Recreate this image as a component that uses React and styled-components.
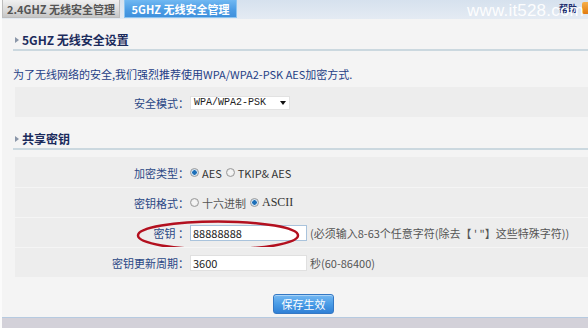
import styled, { createGlobalStyle } from 'styled-components'

const GlobalStyle = createGlobalStyle`
  html, body {
    margin: 0;
    padding: 0;
    background: #f4f4f4;
  }
  body {
    font-family: "Noto Sans CJK SC", "Liberation Sans", sans-serif;
    font-size: 11px;
  }
`

const Page = styled.div`
  width: 588px;
  height: 328px;
  display: flex;
  flex-direction: column;
  background: #f4f4f4;
  border-left: 2px solid #fbfbfb;
  box-sizing: border-box;
  overflow: hidden;
  position: relative;
`

const TabBar = styled.div`
  height: 19px;
  flex: none;
  display: flex;
  align-items: stretch;
  gap: 4px;
  background: linear-gradient(#d6e1ee, #e4ebf3);
  position: relative;
`

const Tab = styled.div`
  width: ${p => p.w}px;
  height: 18px;
  box-sizing: border-box;
  display: flex;
  align-items: center;
  justify-content: center;
  font-weight: bold;
  font-size: 11px;
  color: ${p => (p.active ? '#ffffff' : '#555555')};
  background: ${p => (p.active
    ? 'linear-gradient(#70b8f2, #4a9be4 60%, #3f90dc)'
    : 'linear-gradient(#f0f0f0, #dadada 60%, #c6c6c6)')};
  border: 1px solid ${p => (p.active ? '#8cc4f0' : '#bdbdbd')};
  border-top: none;
`

const Watermark = styled.div`
  position: absolute;
  left: 465px;
  top: 1px;
  font-family: "Liberation Sans", sans-serif;
  font-size: 17px;
  color: rgba(255, 255, 255, 0.95);
  letter-spacing: 0.2px;
  pointer-events: none;
`

const Help = styled.div`
  margin-left: auto;
  display: flex;
  align-items: flex-start;
  gap: 5px;
  padding-top: 2px;
  font-size: 9px;
  font-weight: bold;
  color: #1e2f6e;
  position: relative;
`

const HelpIcon = styled.span`
  width: 6px;
  height: 12px;
  border-radius: 2px 0 0 2px;
  background: linear-gradient(#f6b04a, #e07a10);
`

const Content = styled.div`
  flex: 1;
  display: flex;
  flex-direction: column;
  padding-left: 11px;
`

const SectionTitle = styled.div`
  margin-top: ${p => p.mt}px;
  height: 19px;
  display: flex;
  align-items: center;
  gap: 3px;
  padding-left: 2px;
  border-bottom: 2px solid #cbd8df;
  font-size: 12px;
  font-weight: bold;
  color: #1b2b5c;
`

const Arrow = styled.span`
  width: 0;
  height: 0;
  border-top: 3px solid transparent;
  border-bottom: 3px solid transparent;
  border-left: 4px solid #8a96a8;
`

const Description = styled.p`
  margin: 16px 0 0 0;
  line-height: 14px;
  font-size: 11px;
  color: #1f3f86;
  white-space: nowrap;
`

const Rows = styled.div`
  margin-top: ${p => p.mt}px;
  margin-left: 2px;
  display: flex;
  flex-direction: column;
`

const Row = styled.div`
  height: 30px;
  box-sizing: border-box;
  display: grid;
  grid-template-columns: 174px 1fr;
  align-items: center;
  background: #ededed;
  border-top: 1px solid ${p => (p.first ? '#ededed' : '#f5f5f5')};
  position: relative;
`

const Label = styled.div`
  text-align: right;
  color: #2a4785;
  white-space: nowrap;
`

const Value = styled.div`
  display: flex;
  align-items: center;
  padding-left: 1px;
  color: #333333;
  white-space: nowrap;
`

const Select = styled.div`
  width: 100px;
  height: 14px;
  box-sizing: border-box;
  background: #ffffff;
  border: 1px solid #e2e2e2;
  display: flex;
  align-items: center;
  justify-content: space-between;
  padding: 0 3px 0 3px;
  font-family: "Liberation Mono", monospace;
  font-size: 10px;
  color: #222;
`

const Caret = styled.span`
  width: 0;
  height: 0;
  border-left: 3px solid transparent;
  border-right: 3px solid transparent;
  border-top: 4px solid #111;
`

const Radio = styled.span`
  width: 9px;
  height: 9px;
  box-sizing: border-box;
  border-radius: 50%;
  border: 1px solid #9a9a9a;
  background: radial-gradient(circle, ${p => (p.checked ? '#1c6fb8 0 2px, #cfe2f2 2.5px' : '#f4f4f4 0 2px, #dedede 4px')});
  margin: 0 3px 0 0;
  flex: none;
`

const Option = styled.span`
  margin-right: 4px;
  font-family: ${p => (p.serif ? '"Liberation Serif", serif' : 'inherit')};
  font-size: ${p => (p.serif ? '12px' : '11px')};
  color: ${p => (p.muted ? '#555' : '#333')};
`

const TextInput = styled.div`
  width: 117px;
  height: 16px;
  box-sizing: border-box;
  background: #ffffff;
  border: 1px solid ${p => (p.focus ? '#a9c3dc' : '#e0e0e0')};
  padding-left: 2px;
  display: flex;
  align-items: center;
  font-size: 11px;
  color: #222;
`

const Hint = styled.span`
  margin-left: 3px;
  color: #555;
`

const Ellipse = styled.svg`
  position: absolute;
  left: 122px;
  top: 2px;
  width: 162px;
  height: 31px;
  overflow: visible;
  pointer-events: none;
`

const ButtonBar = styled.div`
  margin-top: 17px;
  display: flex;
  padding-left: 260px;
`

const SaveButton = styled.button`
  width: 61px;
  height: 20px;
  border: 1px solid #3478c4;
  border-radius: 3px;
  background: linear-gradient(#74b8f2, #4a9ce6 50%, #2f80d6);
  color: #ffffff;
  font-family: inherit;
  font-size: 11px;
  padding: 0;
  box-shadow: inset 0 1px 0 rgba(255, 255, 255, 0.4);
`

const Footer = styled.div`
  margin-top: auto;
  height: 10px;
  flex: none;
  border-top: 1px solid #b6cae0;
  background: #d3d1d9;
  margin-left: -2px;
`

function App() {
  return (
    <Page>
      <GlobalStyle />
      <TabBar>
        <Tab w={118}>2.4GHZ 无线安全管理</Tab>
        <Tab w={113} active>5GHZ 无线安全管理</Tab>
        <Help>
          帮助
          <HelpIcon />
        </Help>
        <Watermark>www.it528.com</Watermark>
      </TabBar>
      <Content>
        <SectionTitle mt={11}>
          <Arrow />
          5GHZ 无线安全设置
        </SectionTitle>
        <Description>为了无线网络的安全,我们强烈推荐使用WPA/WPA2-PSK AES加密方式.</Description>
        <Rows mt={6}>
          <Row first>
            <Label>安全模式：</Label>
            <Value>
              <Select>
                WPA/WPA2-PSK
                <Caret />
              </Select>
            </Value>
          </Row>
        </Rows>
        <SectionTitle mt={12}>
          <Arrow />
          共享密钥
        </SectionTitle>
        <Rows mt={7}>
          <Row first>
            <Label>加密类型：</Label>
            <Value>
              <Radio checked />
              <Option>AES</Option>
              <Radio />
              <Option>TKIP&amp; AES</Option>
            </Value>
          </Row>
          <Row>
            <Label>密钥格式：</Label>
            <Value>
              <Radio />
              <Option muted>十六进制</Option>
              <Radio checked />
              <Option serif>ASCII</Option>
            </Value>
          </Row>
          <Row>
            <Label>密钥 ：</Label>
            <Value>
              <TextInput focus>88888888</TextInput>
              <Hint>(必须输入8-63个任意字符(除去【 ' "】这些特殊字符))</Hint>
            </Value>
            <Ellipse viewBox="0 0 162 31">
              <ellipse cx="81" cy="15.5" rx="80" ry="14" fill="none" stroke="#b3101f" strokeWidth="2.5" />
            </Ellipse>
          </Row>
          <Row>
            <Label>密钥更新周期：</Label>
            <Value>
              <TextInput>3600</TextInput>
              <Hint>秒(60-86400)</Hint>
            </Value>
          </Row>
        </Rows>
        <ButtonBar>
          <SaveButton>保存生效</SaveButton>
        </ButtonBar>
      </Content>
      <Footer />
    </Page>
  )
}

export default App
